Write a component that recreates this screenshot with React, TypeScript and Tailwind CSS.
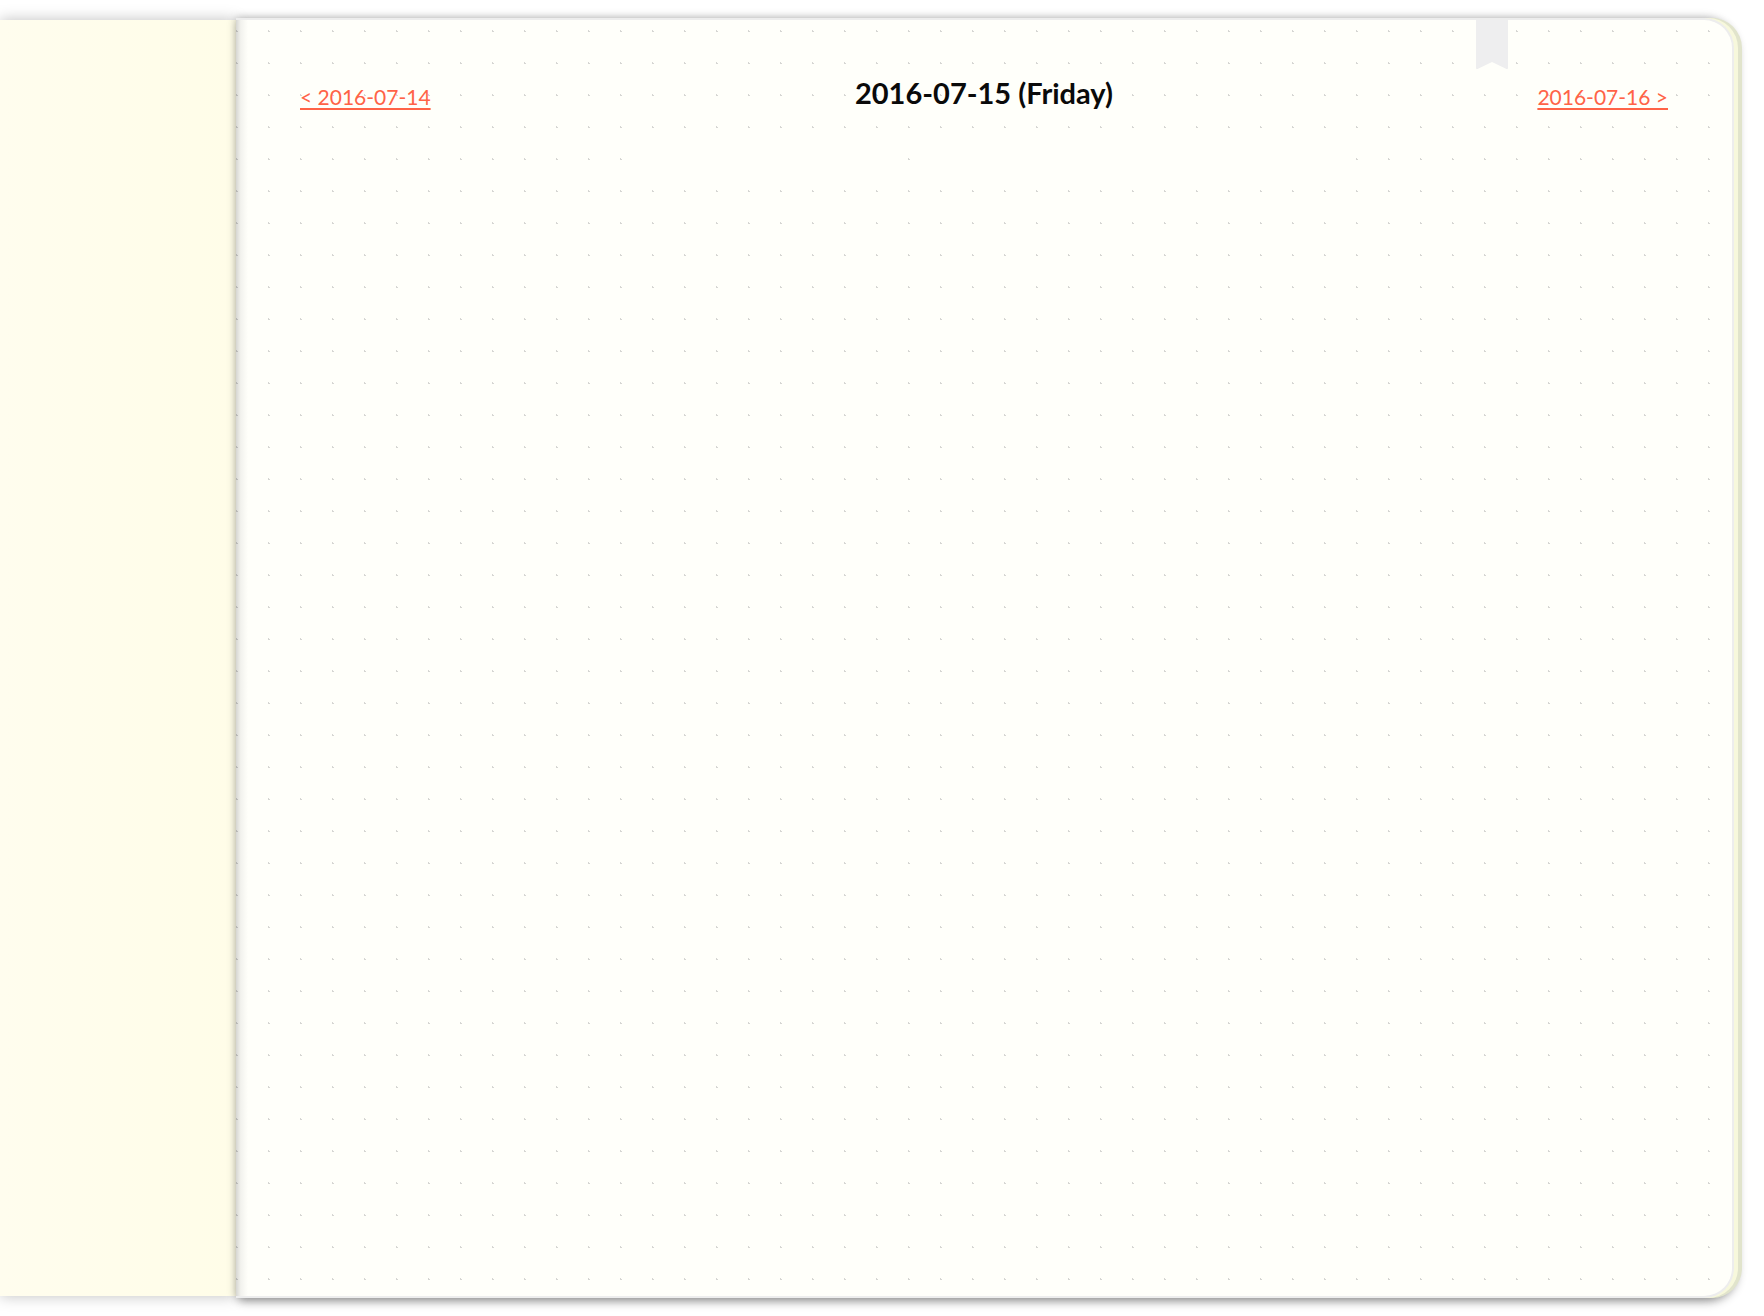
export default function App() {
  return (
    <div className="flex min-h-screen overflow-hidden bg-white py-[18px] pr-[30px] font-['Lato',sans-serif]">
      <aside
        aria-label="Previous page"
        className="my-0.5 w-[236px] shrink-0 bg-linear-to-r from-[#fffdee] to-[#fffde8] shadow-[0_0_14px_rgba(0,0,0,0.25)]"
      />
      <main className="relative flex-1 rounded-r-[30px] border-2 border-l-0 border-[#ededed] bg-[#fffffa] shadow-[4px_0_0_#f7f8dc,8px_0_0_#e1e4cc,0_0_10px_rgba(0,0,0,0.28),4px_4px_10px_rgba(0,0,0,0.3)]">
        <svg aria-hidden="true" className="absolute inset-0 size-full rounded-r-[28px]">
          <defs>
            <pattern id="dots" width="32" height="32" patternUnits="userSpaceOnUse">
              <path d="M0 10h1v1h1v1H0z" fill="#d6d6d3" />
            </pattern>
            <linearGradient id="fold">
              <stop offset="0" stopColor="#000" stopOpacity="0.16" />
              <stop offset="0.4" stopColor="#000" stopOpacity="0.05" />
              <stop offset="1" stopColor="#000" stopOpacity="0" />
            </linearGradient>
          </defs>
          <rect width="100%" height="100%" fill="url(#dots)" />
          <path d="M400 134h268v10H400zM676 134h432v10H676z" fill="#fffffa" />
          <rect width="12" height="100%" fill="url(#fold)" />
        </svg>
        <button type="button" aria-label="Bookmark" className="absolute top-0 right-[224px] h-[50px] w-8">
          <svg aria-hidden="true" viewBox="0 0 32 50" className="size-full">
            <path d="M0 0h32v48q0 1.500-1.500 1L16 42 1.500 49Q0 49.500 0 48z" fill="#eeeeef" />
          </svg>
        </button>
        <header className="relative grid grid-cols-[1fr_auto_1fr] items-end px-16 pt-[53px] text-[#ff6347]">
          <a href="#2016-07-14" className="justify-self-start text-[21px] leading-8 underline decoration-2 underline-offset-3">
            &lt; 2016-07-14
          </a>
          <h1 className="text-[29px] leading-10 font-bold text-[#0a0a0a]">2016-07-15 (Friday)</h1>
          <a href="#2016-07-16" className="justify-self-end text-[21px] leading-8 underline decoration-2 underline-offset-3">
            2016-07-16 &gt;
          </a>
        </header>
      </main>
    </div>
  );
}
